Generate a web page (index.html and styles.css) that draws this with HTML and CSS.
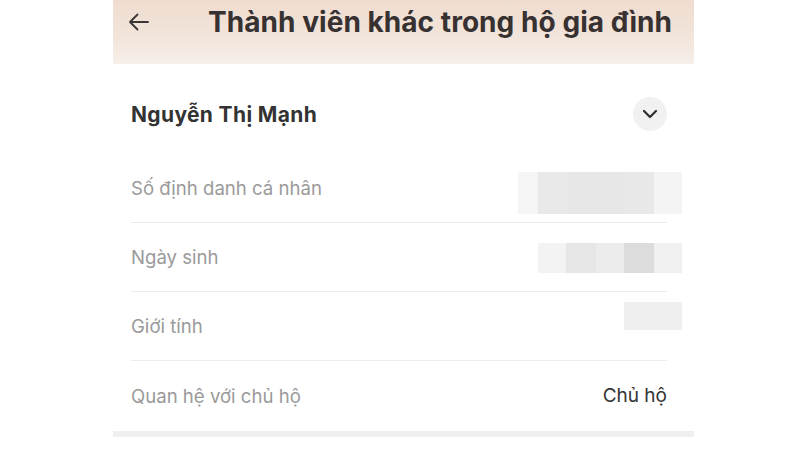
FILE: index.html
```html
<!DOCTYPE html>
<html lang="vi">
<head>
<meta charset="utf-8">
<link rel="stylesheet" href="styles.css">
</head>
<body>
<div class="screen">
  <header class="header">
    <span class="back">
      <svg width="22" height="18" viewBox="0 0 22 18"><path d="M20 9H2M9.5 1.5L2 9l7.5 7.5" fill="none" stroke="#3a3636" stroke-width="1.8" stroke-linecap="round" stroke-linejoin="round"/></svg>
    </span>
    <h1 class="title">Thành viên khác trong hộ gia đình</h1>
  </header>
  <section class="card">
    <div class="name-row">
      <span class="name">Nguyễn Thị Mạnh</span>
      <span class="toggle">
        <svg width="16" height="10" viewBox="0 0 16 10"><path d="M2 2l6 6 6-6" fill="none" stroke="#2d2d2d" stroke-width="2.2" stroke-linecap="round" stroke-linejoin="round"/></svg>
      </span>
    </div>
    <div class="row">
      <span class="label">Số định danh cá nhân</span>
      <span class="blur blur-id"><i class="b1"></i><i class="b2"></i><i class="b3"></i><i class="b4"></i></span>
    </div>
    <div class="row">
      <span class="label">Ngày sinh</span>
      <span class="blur blur-dob"><i class="c1"></i><i class="c2"></i><i class="c3"></i><i class="c4"></i><i class="c5"></i></span>
    </div>
    <div class="row">
      <span class="label">Giới tính</span>
      <span class="blur blur-sex"></span>
    </div>
    <div class="row last">
      <span class="label">Quan hệ với chủ hộ</span>
      <span class="value">Chủ hộ</span>
    </div>
  </section>
  <div class="band"></div>
  <div class="next"><span class="stub"></span></div>
</div>
</body>
</html>
```

FILE: styles.css
```css
* { box-sizing: border-box; }
html, body { margin: 0; padding: 0; background: #fff; }
body { font-family: Inter, Roboto, "Noto Sans", "Liberation Sans", sans-serif; overflow: hidden; }
.screen { width: 581px; margin-left: 113px; }
.header {
  height: 64px;
  background: linear-gradient(180deg, #efdccf 0%, #f2e5db 60%, #f6efe9 100%);
  display: flex;
  align-items: center;
  padding: 0 0 20px 15px;
}
.back { width: 22px; height: 18px; display: flex; }
.title {
  margin: 0 0 0 58px;
  font-size: 28px;
  font-weight: 700;
  color: #373131;
  letter-spacing: 0.05px;
  white-space: nowrap;
}
.card { padding: 0 27px 0 18px; }
.name-row {
  height: 90px;
  display: flex;
  align-items: center;
  justify-content: space-between;
  padding-top: 10px;
}
.name { font-size: 21px; font-weight: 700; color: #333; letter-spacing: 0.35px; }
.toggle {
  width: 34px; height: 34px; border-radius: 50%;
  background: #f1f1f1;
  display: flex; align-items: center; justify-content: center;
}
.row {
  position: relative;
  height: 69px;
  display: flex;
  align-items: center;
  justify-content: space-between;
  border-bottom: 1px solid #ececec;
}
.row.last { border-bottom: none; }
.label { font-size: 18.6px; color: #9a9a9a; }
.value { font-size: 19px; color: #333; }
.blur { position: absolute; display: flex; }
.blur i { display: block; height: 100%; }
.blur-id { left: 387px; top: 18px; width: 164px; height: 42px; background: #f4f4f4; }
.blur-id .b1 { width: 20px; background: #f5f5f5; }
.blur-id .b2 { width: 30px; background: #e9e9e9; }
.blur-id .b3 { width: 56px; background: #e6e6e6; }
.blur-id .b4 { width: 30px; background: #e8e8e8; }
.blur-dob { left: 407px; top: 20px; width: 144px; height: 30px; background: #f1f1f1; }
.blur-dob .c1 { width: 28px; background: #f3f3f3; }
.blur-dob .c2 { width: 30px; background: #e6e6e6; }
.blur-dob .c3 { width: 28px; background: #ebebeb; }
.blur-dob .c4 { width: 30px; background: #dcdcdc; }
.blur-dob .c5 { width: 28px; background: #f0f0f0; }
.blur-sex { left: 493px; top: 10px; width: 58px; height: 28px; background: #efefef; }
.band { height: 6px; background: #efefef; margin-top: 1px; }
.next { height: 20px; padding-left: 107px; display: flex; align-items: flex-end; }
.stub { width: 127px; height: 2px; background: #d8d8d8; }
```
